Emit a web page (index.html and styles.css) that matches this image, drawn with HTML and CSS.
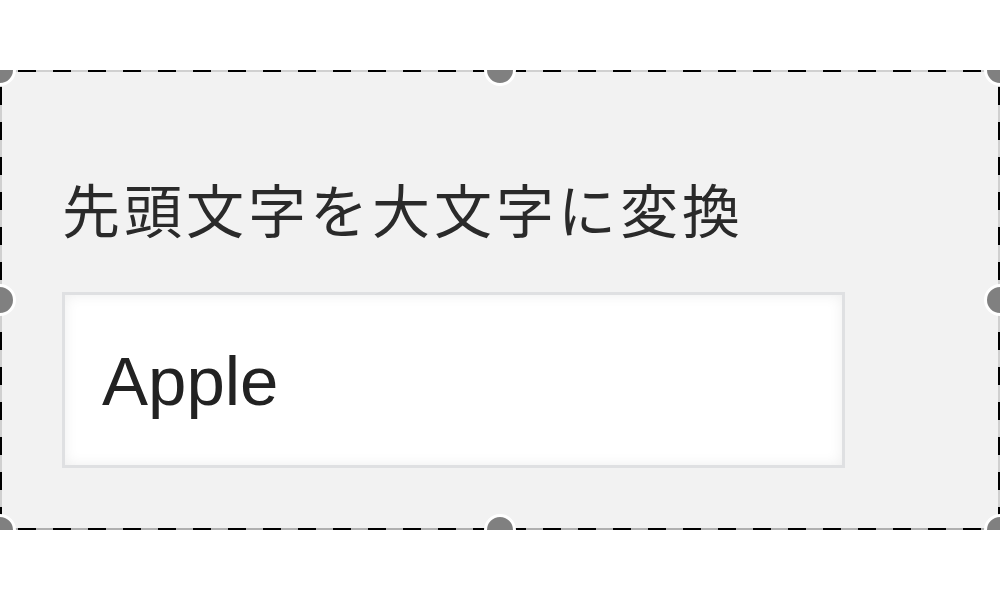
FILE: index.html
```html
<!DOCTYPE html>
<html lang="ja">
<head>
<meta charset="utf-8">
<link rel="stylesheet" href="styles.css">
</head>
<body>
<div class="stage">
  <div class="frame">
    <div class="label">先頭文字を大文字に変換</div>
    <div class="field"><span class="value">Apple</span></div>
    <span class="handle h-tl"></span>
    <span class="handle h-tc"></span>
    <span class="handle h-tr"></span>
    <span class="handle h-ml"></span>
    <span class="handle h-mr"></span>
    <span class="handle h-bl"></span>
    <span class="handle h-bc"></span>
    <span class="handle h-br"></span>
  </div>
</div>
</body>
</html>
```
FILE: styles.css
```css
html, body {
  margin: 0;
  padding: 0;
  background: #ffffff;
}
.stage {
  width: 1000px;
  height: 600px;
  padding-top: 70px;
  box-sizing: border-box;
}
.frame {
  position: relative;
  overflow: hidden;
  height: 460px;
  width: 1000px;
  box-sizing: border-box;
  background-color: #f2f2f2;
  background-image:
    repeating-linear-gradient(to right, #000 0 18px, transparent 18px 35px),
    repeating-linear-gradient(to right, #000 0 18px, transparent 18px 35px),
    repeating-linear-gradient(to bottom, #000 0 18px, transparent 18px 35px),
    repeating-linear-gradient(to bottom, #000 0 18px, transparent 18px 35px),
    linear-gradient(#d0d0d0, #d0d0d0),
    linear-gradient(#b0b0b0, #b0b0b0),
    linear-gradient(#d0d0d0, #d0d0d0),
    linear-gradient(#d0d0d0, #d0d0d0);
  background-size:
    100% 2px, 100% 2px, 2px 100%, 2px 100%,
    100% 2px, 100% 2px, 2px 100%, 2px 100%;
  background-position:
    18px 0, 18px 100%, 0 17px, 100% 17px,
    0 0, 0 100%, 0 0, 100% 0;
  background-repeat: no-repeat;
  padding: 100px 0 0 62px;
  display: flex;
  flex-direction: column;
  gap: 46px;
}
.label {
  font-family: "Noto Sans CJK JP", "Noto Sans", sans-serif;
  font-size: 58px;
  letter-spacing: 4px;
  line-height: 76px;
  color: #2a2a2a;
}
.field {
  width: 783px;
  height: 176px;
  box-sizing: border-box;
  border: 3px solid #dfe0e2;
  background: #ffffff;
  box-shadow: inset 0 0 14px rgba(0, 0, 0, 0.07);
  display: flex;
  align-items: center;
  padding-left: 37px;
}
.value {
  font-family: "Liberation Sans", Arial, sans-serif;
  font-size: 69px;
  color: #222;
  margin-top: 2px;
}
.handle {
  position: absolute;
  width: 26px;
  height: 26px;
  border-radius: 50%;
  background: #808080;
  border: 3px solid #ffffff;
  transform: translate(-50%, -50%);
}
.h-tl { left: 0; top: 0; }
.h-tc { left: 500px; top: 0; }
.h-tr { left: 1000px; top: 0; }
.h-ml { left: 0; top: 230px; }
.h-mr { left: 1000px; top: 230px; }
.h-bl { left: 0; top: 460px; }
.h-bc { left: 500px; top: 460px; }
.h-br { left: 1000px; top: 460px; }
```
